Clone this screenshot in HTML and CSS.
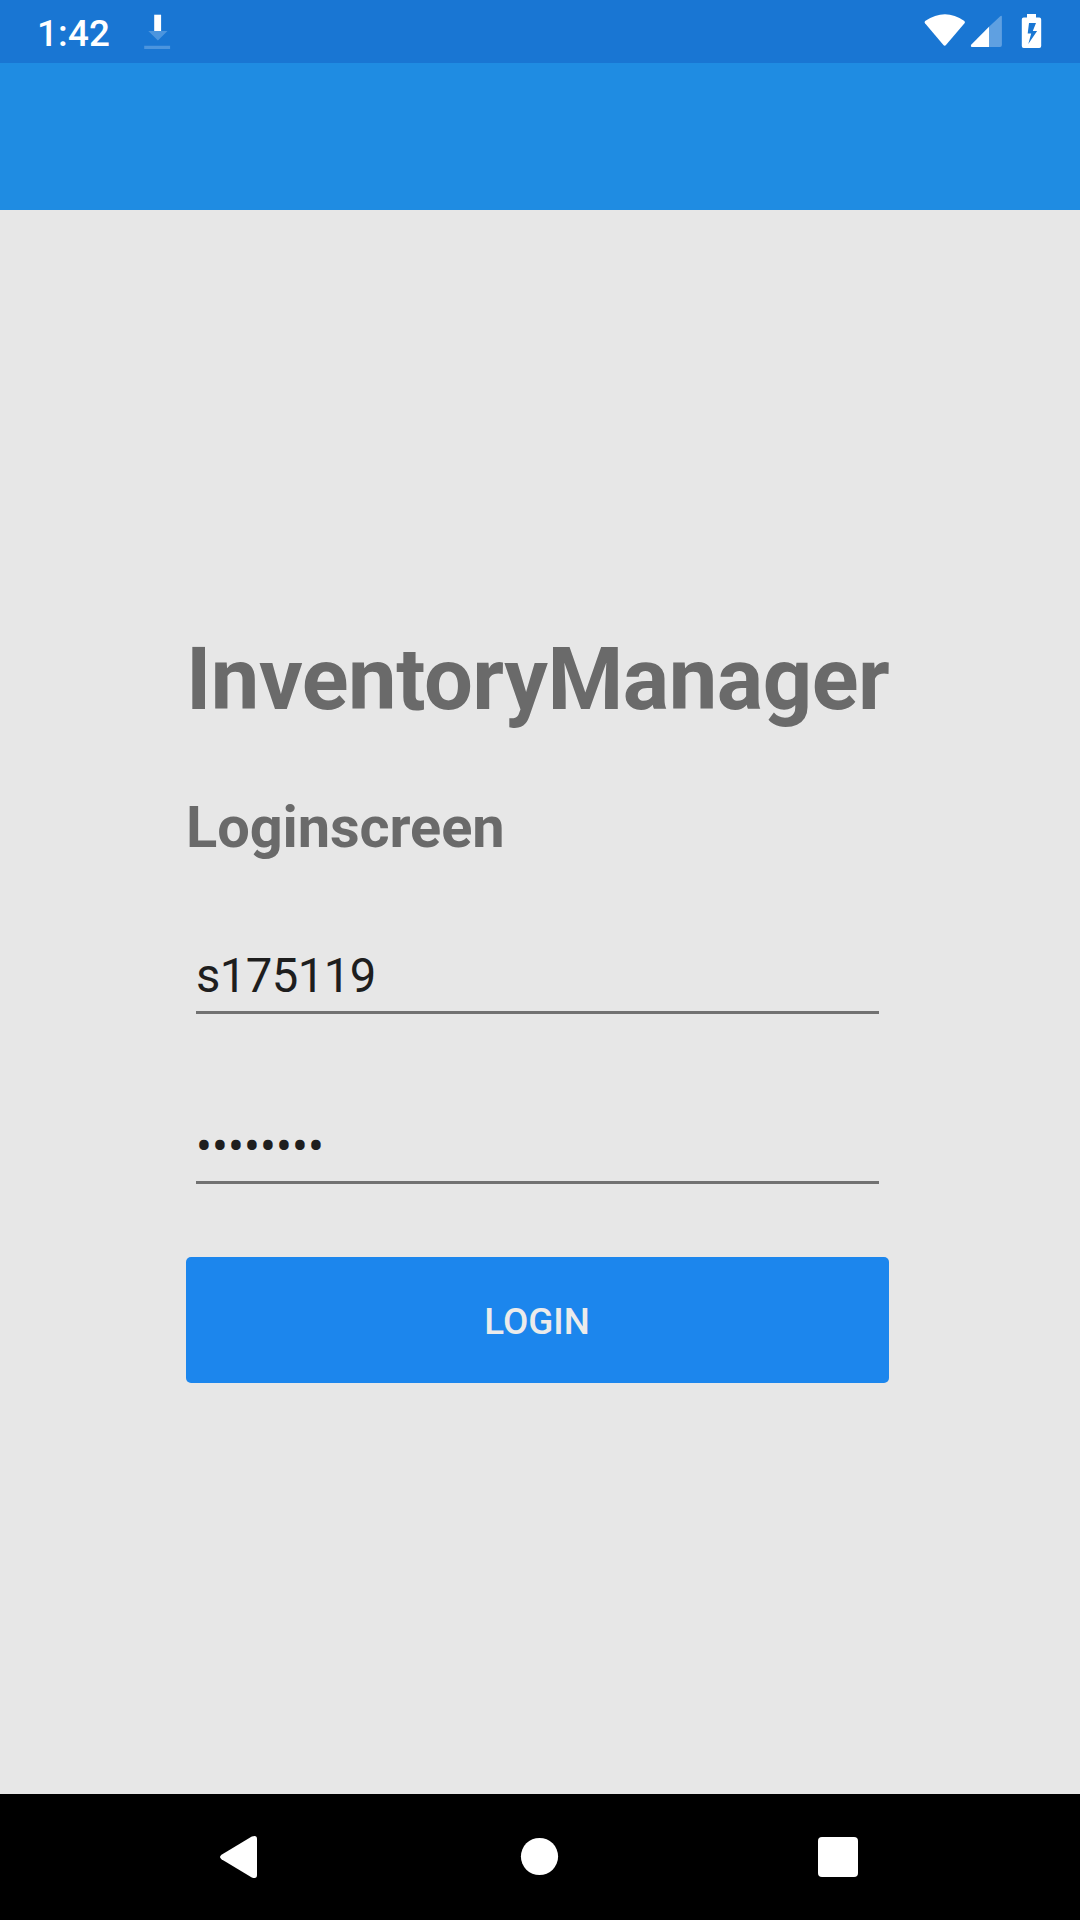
FILE: index.html
```html
<!DOCTYPE html>
<html lang="en">
<head>
<meta charset="utf-8">
<title>InventoryManager</title>
<link rel="stylesheet" href="styles.css">
</head>
<body>
<div class="screen">
  <header class="status-bar">
    <span class="clock">1:42</span>
    <svg class="download" width="28" height="36" viewBox="0 0 28 36">
      <path class="solid" d="M10.200 .7h6.900v16.300h-6.900z"/>
      <path class="faint-mark" d="M4.300 17h19.200L13.900 26.400zM.2 31.700h25.900v3.300H.2z"/>
    </svg>
    <svg class="indicators" width="120" height="36" viewBox="0 0 120 36">
      <path class="solid" d="M1 9.2Q0 8 1.5 6.8C14-2 28-2 40 6.8Q41.500 8 40.500 9.200L22.200 30.800Q20.700 32.500 19.200 30.800z"/>
      <path class="faint-signal" d="M65 12.700 76 2.400Q77.900 1 77.900 3V31Q77.900 33 76 33H65z"/>
      <path class="solid" d="M65 12.700V33H48Q46 32.600 47.400 30.500z"/>
      <path class="solid" fill-rule="evenodd" d="M103 0h9v3.500h3.300q1.900 0 1.900 1.900v26.600q0 1.900-1.900 1.900H99.700q-1.900 0-1.900-1.900V5.400q0-1.900 1.900-1.900h3.300zM105 9l-1.300 10.400h3.500L104.300 30l8.800-13h-4.300l3.200-8z"/>
    </svg>
  </header>
  <div class="app-bar"></div>
  <main class="content">
    <h1 class="title">InventoryManager</h1>
    <h2 class="subtitle">Loginscreen</h2>
    <div class="field">s175119</div>
    <div class="field password">••••••••</div>
    <button class="login" type="button">LOGIN</button>
  </main>
  <nav class="nav-bar">
    <svg class="nav-icons" width="1080" height="126" viewBox="0 0 1080 126">
      <path d="M221.500 60.700 251.800 42.600Q257 40.500 257 45V81Q257 85.500 251.800 83.400L221.500 65.200Q218.500 63 221.500 60.700z"/>
      <circle cx="539.500" cy="62.500" r="18.600"/>
      <rect x="818" y="43" width="40" height="40" rx="4"/>
    </svg>
  </nav>
</div>
</body>
</html>
```
FILE: styles.css
```css
body {
  margin: 0;
  font-family: Roboto, sans-serif;
}

.screen {
  display: flex;
  flex-direction: column;
  width: 1080px;
  height: 1920px;
  background: #e7e7e7;
}

.status-bar {
  display: flex;
  align-items: flex-start;
  box-sizing: border-box;
  height: 63px;
  padding: 14px 36px 0 37px;
  background: #1976d3;
}

.clock {
  width: 107px;
  color: #fff;
  font-size: 36.75px;
  font-weight: 500;
  letter-spacing: 0.2px;
  line-height: 39px;
}

.indicators {
  margin-left: auto;
}

.solid {
  fill: #fff;
}

.faint-mark {
  fill: #4c95de;
}

.faint-signal {
  fill: #5fa0e1;
}

.app-bar {
  height: 147px;
  background: #1f8ce2;
}

.content {
  display: flex;
  flex: 1;
  flex-direction: column;
  padding: 418px 191px 0 186px;
}

.title,
.subtitle {
  margin: 0;
  color: #6a6a6a;
  font-weight: 700;
  white-space: nowrap;
}

.title {
  font-size: 86.625px;
  letter-spacing: -0.46px;
  line-height: 104px;
}

.subtitle {
  margin: 61px 0 87px;
  font-size: 57.75px;
  letter-spacing: -0.1px;
  line-height: 68px;
}

.field {
  margin: 0 10px 104px;
  padding-bottom: 7px;
  border-bottom: 3px solid #727272;
  color: #1e1e1e;
  font-size: 47.25px;
  letter-spacing: -0.55px;
  line-height: 56px;
}

.password {
  padding: 1px 0 6px;
  letter-spacing: 0.05px;
}

.login {
  height: 126px;
  margin-top: -31px;
  padding: 2px 1px 0 0;
  border: 0;
  border-radius: 5px;
  background: #1c86ed;
  color: #ebebeb;
  font-family: inherit;
  font-size: 36.75px;
  font-weight: 500;
}

.nav-bar {
  height: 126px;
  background: #000;
}

.nav-icons {
  display: block;
  fill: #fff;
}
```
